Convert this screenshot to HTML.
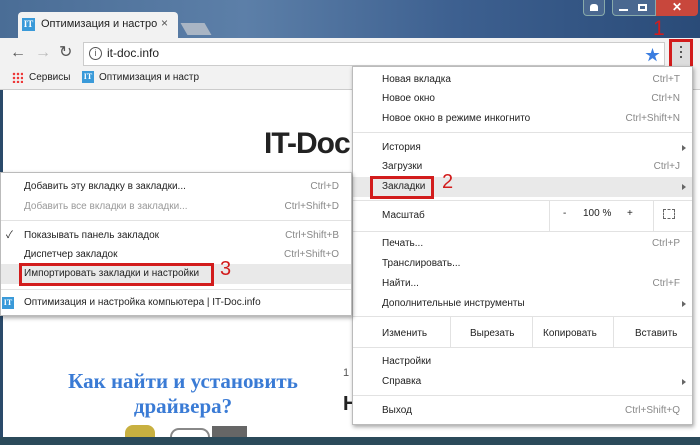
<!DOCTYPE html>
<html><head><meta charset="utf-8"><style>
*{margin:0;padding:0;box-sizing:border-box}
body{width:700px;height:445px;overflow:hidden;position:relative;font-family:"Liberation Sans","Noto Sans CJK SC",sans-serif;font-size:10px;color:#222;background:#2a4a6a}
.a{position:absolute}
.mi{position:absolute;left:0;right:0;height:20px;line-height:20px;font-size:10px;color:#222}
.mi .k{position:absolute;right:12px;top:0;color:#888}
.sep{position:absolute;left:0;right:0;height:1px;background:#e2e2e2}
.arr{position:absolute;right:6px;top:7px;width:0;height:0;border-left:4px solid #666;border-top:3px solid transparent;border-bottom:3px solid transparent}
</style></head><body>
<div class="a" style="left:0;top:0;width:700px;height:40px;background:linear-gradient(90deg,#4a6d96 0%,#5c7fa8 35%,#3d6090 65%,#2a4b78 100%)"></div>
<!-- window buttons -->
<div class="a" style="left:583px;top:0;width:22px;height:16px;border:1px solid #8aa;border-top:none;border-radius:0 0 4px 4px;background:#4a6890"></div>
<div class="a" style="left:590px;top:4px;width:8px;height:7px;background:#fff;border-radius:3px 3px 0 0"></div>
<div class="a" style="left:612px;top:0;width:44px;height:16px;border:1px solid #8aa;border-top:none;background:#4a6890;border-radius:0 0 0 4px"></div>
<div class="a" style="left:619px;top:9px;width:9px;height:2px;background:#fff"></div>
<div class="a" style="left:638px;top:4px;width:9px;height:7px;border:2px solid #fff"></div>
<div class="a" style="left:656px;top:0;width:42px;height:16px;background:#c8473c;border-radius:0 0 4px 0;color:#fff;font-weight:bold;text-align:center;font-size:12px;line-height:15px">✕</div>
<!-- tabs -->
<div class="a" style="left:184px;top:23px;width:24px;height:12px;background:#a9b5c4;transform:skewX(30deg)"></div>
<div class="a" style="left:18px;top:12px;width:160px;height:28px;background:#f2f2f2;border-radius:4px 4px 0 0"></div>
<div class="a" style="left:22px;top:18px;width:13px;height:13px;background:#3a9ad9;color:#fff;font:bold 9px 'Liberation Serif',serif;text-align:center;line-height:13px">IT</div>
<div class="a" style="left:41px;top:18px;font-size:11px;color:#222">Оптимизация и настро</div>
<div class="a" style="left:161px;top:16px;font-size:12px;color:#555">×</div>
<!-- toolbar -->
<div class="a" style="left:0;top:38px;width:700px;height:52px;background:#f2f2f2;border-bottom:1px solid #ccc"></div>
<div class="a" style="left:10px;top:44px;font-size:16px;color:#555">←</div>
<div class="a" style="left:35px;top:44px;font-size:16px;color:#bbb">→</div>
<div class="a" style="left:59px;top:42px;font-size:16px;color:#555">↻</div>
<div class="a" style="left:83px;top:42px;width:582px;height:24px;background:#fff;border:1px solid #ccc"></div>
<div class="a" style="left:89px;top:47px;width:13px;height:13px;border:1.5px solid #555;border-radius:50%;font-size:9px;text-align:center;line-height:10px;color:#555">i</div>
<div class="a" style="left:107px;top:46px;font-size:12px;color:#222">it-doc.info</div>
<div class="a" style="left:645px;top:44px;font-size:15px;color:#3a7de0">★</div>
<div class="a" style="left:669px;top:39px;width:24px;height:30px;border:3px solid #d21c1c;background:#ddd"></div>
<div class="a" style="left:680px;top:46px;width:2px;height:2px;background:#555;box-shadow:0 5px 0 #555,0 10px 0 #555"></div>
<div class="a" style="left:653px;top:17px;font-size:21px;color:#d21c1c">1</div>
<!-- bookmarks bar -->
<div class="a" style="left:12px;top:72px;width:11px;height:11px;background:radial-gradient(circle,#e33 1px,transparent 1.5px) 0 0/4px 4px"></div>
<div class="a" style="left:29px;top:72px;font-size:10px">Сервисы</div>
<div class="a" style="left:82px;top:71px;width:12px;height:12px;background:#3a9ad9;color:#fff;font:bold 8px 'Liberation Serif',serif;text-align:center;line-height:12px">IT</div>
<div class="a" style="left:99px;top:72px;font-size:10px">Оптимизация и настр</div>
<!-- page -->
<div class="a" style="left:3px;top:90px;width:697px;height:347px;background:#fff"></div>
<div class="a" style="left:264px;top:127px;font-size:30px;font-weight:bold;color:#222;letter-spacing:-1px">IT-Doc</div>
<div class="a" style="left:20px;top:369px;width:326px;text-align:center;font:bold 21px 'Liberation Serif',serif;color:#3a7bd5;line-height:25px">Как найти и установить<br>драйвера?</div>
<div class="a" style="left:343px;top:367px;font-size:11px;color:#555">1</div>
<div class="a" style="left:343px;top:393px;font-size:20px;font-weight:bold;color:#222">Н</div>
<div class="a" style="left:125px;top:425px;width:30px;height:12px;background:#c8b040;border-radius:8px 8px 0 0"></div>
<div class="a" style="left:170px;top:428px;width:40px;height:9px;border:2px solid #888;border-bottom:none;border-radius:20px 20px 0 0"></div>
<div class="a" style="left:212px;top:426px;width:35px;height:11px;background:#666"></div>
<div class="a" style="left:0;top:437px;width:700px;height:8px;background:#2b4a5a"></div>
<!-- main menu -->
<div class="a" style="left:352px;top:66px;width:341px;height:359px;background:#fff;border:1px solid #bbb;box-shadow:1px 2px 4px rgba(0,0,0,.35)">
 <div class="mi" style="top:3px;padding-left:29px">Новая вкладка<span class="k">Ctrl+T</span></div>
 <div class="mi" style="top:22px;padding-left:29px">Новое окно<span class="k">Ctrl+N</span></div>
 <div class="mi" style="top:42px;padding-left:29px">Новое окно в режиме инкогнито<span class="k">Ctrl+Shift+N</span></div>
 <div class="sep" style="top:65px"></div>
 <div class="mi" style="top:71px;padding-left:29px">История<span class="arr"></span></div>
 <div class="mi" style="top:90px;padding-left:29px">Загрузки<span class="k">Ctrl+J</span></div>
 <div class="mi" style="top:110px;padding-left:29px;background:#e9e9e9">Закладки<span class="arr"></span></div>
 <div class="a" style="left:17px;top:109px;width:64px;height:23px;border:3px solid #d21c1c"></div>
 <div class="a" style="left:89px;top:104px;font-size:20px;color:#d21c1c">2</div>
 <div class="sep" style="top:133px"></div>
 <div class="mi" style="top:139px;padding-left:29px">Масштаб</div>
 <div class="a" style="left:196px;top:134px;width:1px;height:30px;background:#e2e2e2"></div>
 <div class="a" style="left:300px;top:134px;width:1px;height:30px;background:#e2e2e2"></div>
 <div class="a" style="left:210px;top:141px;font-size:10px">-</div>
 <div class="a" style="left:230px;top:141px;font-size:10px">100 %</div>
 <div class="a" style="left:274px;top:141px;font-size:10px">+</div>
 <div class="a" style="left:310px;top:142px;width:12px;height:10px;border:1px dashed #666"></div>
 <div class="sep" style="top:164px"></div>
 <div class="mi" style="top:167px;padding-left:29px">Печать...<span class="k">Ctrl+P</span></div>
 <div class="mi" style="top:187px;padding-left:29px">Транслировать...</div>
 <div class="mi" style="top:207px;padding-left:29px">Найти...<span class="k">Ctrl+F</span></div>
 <div class="mi" style="top:227px;padding-left:29px">Дополнительные инструменты<span class="arr"></span></div>
 <div class="sep" style="top:249px"></div>
 <div class="mi" style="top:257px;padding-left:29px">Изменить</div>
 <div class="a" style="left:97px;top:250px;width:1px;height:30px;background:#e2e2e2"></div>
 <div class="a" style="left:179px;top:250px;width:1px;height:30px;background:#e2e2e2"></div>
 <div class="a" style="left:260px;top:250px;width:1px;height:30px;background:#e2e2e2"></div>
 <div class="a" style="left:117px;top:261px">Вырезать</div>
 <div class="a" style="left:190px;top:261px">Копировать</div>
 <div class="a" style="left:282px;top:261px">Вставить</div>
 <div class="sep" style="top:280px"></div>
 <div class="mi" style="top:285px;padding-left:29px">Настройки</div>
 <div class="mi" style="top:305px;padding-left:29px">Справка<span class="arr"></span></div>
 <div class="sep" style="top:328px"></div>
 <div class="mi" style="top:334px;padding-left:29px">Выход<span class="k">Ctrl+Shift+Q</span></div>
</div>
<!-- submenu -->
<div class="a" style="left:0;top:172px;width:352px;height:144px;background:#fff;border:1px solid #bbb;box-shadow:1px 2px 4px rgba(0,0,0,.35)">
 <div class="mi" style="top:4px;padding-left:23px">Добавить эту вкладку в закладки...<span class="k">Ctrl+D</span></div>
 <div class="mi" style="top:24px;padding-left:23px;color:#999">Добавить все вкладки в закладки...<span class="k">Ctrl+Shift+D</span></div>
 <div class="sep" style="top:47px"></div>
 <div class="mi" style="top:53px;padding-left:23px"><span class="a" style="left:5px;top:0">✓</span>Показывать панель закладок<span class="k">Ctrl+Shift+B</span></div>
 <div class="mi" style="top:72px;padding-left:23px">Диспетчер закладок<span class="k">Ctrl+Shift+O</span></div>
 <div class="mi" style="top:91px;padding-left:23px;background:#e9e9e9">Импортировать закладки и настройки</div>
 <div class="a" style="left:18px;top:90px;width:195px;height:23px;border:3px solid #d21c1c"></div>
 <div class="a" style="left:219px;top:85px;font-size:20px;color:#d21c1c">3</div>
 <div class="sep" style="top:116px"></div>
 <div class="a" style="left:1px;top:124px;width:12px;height:12px;background:#3a9ad9;color:#fff;font:bold 8px 'Liberation Serif',serif;text-align:center;line-height:12px">IT</div>
 <div class="mi" style="top:120px;padding-left:23px">Оптимизация и настройка компьютера | IT-Doc.info</div>
</div>
</body></html>
